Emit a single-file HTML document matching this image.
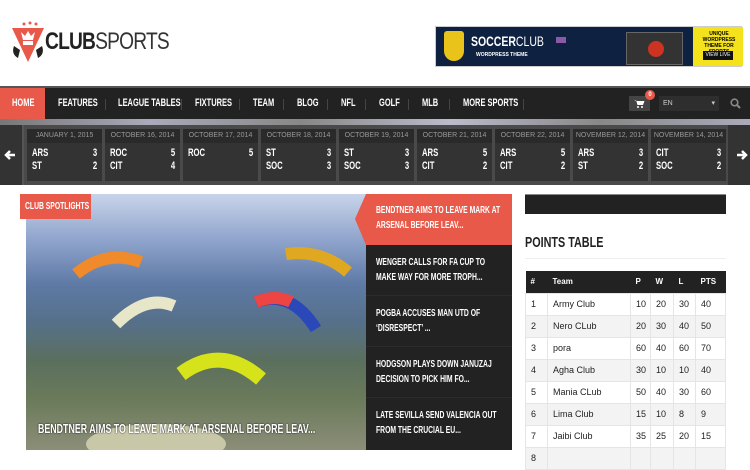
<!DOCTYPE html>
<html><head><meta charset="utf-8"><style>
*{margin:0;padding:0;box-sizing:border-box}
body{width:750px;height:450px;overflow:hidden;background:#fff;font-family:"Liberation Sans",sans-serif;position:relative}
.c{font-family:"Liberation Sans",sans-serif;font-weight:bold;text-transform:uppercase}
.s{display:inline-block;transform:scaleX(.68);transform-origin:0 0;white-space:nowrap}
.abs{position:absolute}
.nav{top:86px;left:0;width:750px;height:33px;background:#222;border-top:2px solid #555}
.nav a{position:absolute;top:0;height:31px;line-height:31px;color:#fff;font-size:11px;text-decoration:none;transform:scaleX(.68);transform-origin:0 0;white-space:nowrap}
.sep{position:absolute;top:11px;width:1px;height:11px;background:#444}
.tick{top:119px;left:0;width:750px;height:66px;background:#4a4a4a}
.cell{position:absolute;top:10px;width:75px;height:52px;background:#333}
.cell .d{height:14px;background:#2a2a2a;color:#999;font-size:7px;text-align:center;line-height:14px;font-weight:normal}
.cell .r{font-size:11px;color:#fff;height:13px;line-height:13px;padding:0 5px;position:relative}
.cell .r span:first-child{display:inline-block;transform:scaleX(.7);transform-origin:0 0}
.cell .r span:last-child{position:absolute;right:5px;transform:scaleX(.7);transform-origin:100% 0}
.nw{position:absolute;left:366px;width:146px;color:#fff;font-size:10px;line-height:15px;padding:10px 10px;border-bottom:1px solid #2c2c2c}
.nw div{width:186px;transform:scaleX(.68);transform-origin:0 0;white-space:normal}
table{border-collapse:collapse;font-size:9px;color:#222}
td{border:1px solid #e5e5e5;height:22px;padding-left:5px}
</style></head><body>
<!-- logo -->
<svg class="abs" style="left:10px;top:20px" width="36" height="44" viewBox="0 0 36 44">
<path d="M2 8 L34 8 L18 42 Z" fill="#e8594a"/>
<path d="M4 26 Q1 34 8 38 L10 30 Z M32 26 Q35 34 28 38 L26 30Z" fill="#222"/>
<path d="M11 12 L13 20 L23 20 L25 12 L21 16 L18 11 L15 16 Z" fill="#fff"/>
<rect x="13" y="21" width="10" height="4" fill="#fff"/>
<circle cx="14" cy="4" r="1.5" fill="#e8594a"/><circle cx="20" cy="3" r="1.5" fill="#e8594a"/><circle cx="26" cy="4" r="1.5" fill="#e8594a"/>
</svg>
<div class="abs" style="left:45px;top:28px;font-size:24px;letter-spacing:-1px;color:#222;transform:scaleX(.8);transform-origin:0 0;white-space:nowrap"><b>CLUB</b><span style="color:#333">SPORTS</span></div>
<!-- banner -->
<div class="abs" style="left:435px;top:26px;width:307px;height:41px;background:#0f2140;border:1px solid #ccc">
<div class="abs" style="left:8px;top:4px;width:20px;height:30px;background:#e9c21a;border-radius:3px 3px 10px 10px"></div>
<div class="abs" style="left:35px;top:6px;color:#fff;font-size:14px;font-weight:bold;transform:scaleX(.75);transform-origin:0 0">SOCCER<span style="font-weight:normal">CLUB</span></div>
<div class="abs" style="left:40px;top:25px;color:#fff;font-size:5px;font-weight:bold">WORDPRESS THEME</div>
<div class="abs" style="left:120px;top:10px;width:10px;height:6px;background:#8b5aa6"></div>
<div class="abs" style="left:190px;top:5px;width:57px;height:33px;background:#333;border:1px solid #666"></div>
<div class="abs" style="left:212px;top:14px;width:16px;height:16px;border-radius:50%;background:#c32;"></div>
<div class="abs" style="left:257px;top:0;width:50px;height:39px;background:#f4e21d"></div>
<div class="abs" style="left:259px;top:4px;width:48px;font-size:5px;font-weight:bold;text-align:center">UNIQUE WORDPRESS THEME FOR SPORTS</div>
<div class="abs" style="left:267px;top:24px;width:30px;height:9px;background:#111;color:#fff;font-size:5px;text-align:center;line-height:9px">VIEW LIVE</div>
</div>
<!-- nav -->
<div class="abs nav c">
<div class="abs" style="left:0;top:0;width:45px;height:31px;background:#e8594a"></div>
<a style="left:12px">Home</a><a style="left:58px">Features</a><a style="left:118px">League Tables</a><a style="left:195px">Fixtures</a><a style="left:253px">Team</a><a style="left:297px">Blog</a><a style="left:341px">NFL</a><a style="left:379px">Golf</a><a style="left:422px">MLB</a><a style="left:463px">More Sports</a>
<div class="sep" style="left:105px"></div><div class="sep" style="left:181px"></div><div class="sep" style="left:239px"></div><div class="sep" style="left:283px"></div><div class="sep" style="left:327px"></div><div class="sep" style="left:365px"></div><div class="sep" style="left:408px"></div><div class="sep" style="left:449px"></div><div class="sep" style="left:523px"></div>
<div class="abs" style="left:629px;top:8px;width:21px;height:15px;background:#444"></div>
<svg class="abs" style="left:634px;top:11px" width="11" height="9"><path d="M0 1h2l1.5 5h5.5l1.5-4H3" fill="#fff"/><circle cx="4" cy="8" r="1" fill="#fff"/><circle cx="8" cy="8" r="1" fill="#fff"/></svg>
<div class="abs" style="left:645px;top:2px;width:10px;height:10px;border-radius:50%;background:#e8594a;color:#fff;font-size:6px;text-align:center;line-height:10px">0</div>
<div class="abs" style="left:659px;top:8px;width:60px;height:15px;background:#2e2e2e;color:#ccc;font-size:7px;line-height:15px;padding-left:4px;font-weight:normal">EN<span style="position:absolute;right:4px">▾</span></div>
<svg class="abs" style="left:730px;top:10px" width="11" height="11"><circle cx="4.5" cy="4.5" r="3.3" stroke="#888" stroke-width="1.6" fill="none"/><line x1="7" y1="7" x2="10" y2="10" stroke="#888" stroke-width="2"/></svg>
</div>
<!-- ticker -->
<div class="abs tick">
<div class="abs" style="left:0;top:0;width:750px;height:6px;background:linear-gradient(90deg,#777,#aab 20%,#888 40%,#bbc 60%,#888 80%,#aab)"></div>
<div class="abs" style="left:0;top:6px;width:22px;height:60px;background:#333"></div>
<svg class="abs" style="left:4px;top:30px" width="12" height="12"><path d="M11 6H3M6 2L2 6l4 4" stroke="#fff" stroke-width="2.5" fill="none"/></svg>
<div class="abs" style="left:22px;top:6px;width:2px;height:60px;background:#555"></div>
<div class="abs" style="left:728px;top:6px;width:22px;height:60px;background:#333"></div>
<svg class="abs" style="left:736px;top:30px" width="12" height="12"><path d="M1 6h8M6 2l4 4-4 4" stroke="#fff" stroke-width="2.5" fill="none"/></svg>
<div class="c">
<div class="cell" style="left:27px"><div class="d">JANUARY 1, 2015</div><div class="r" style="margin-top:4px"><span>ARS</span><span>3</span></div><div class="r"><span>ST</span><span>2</span></div></div>
<div class="cell" style="left:105px"><div class="d">OCTOBER 16, 2014</div><div class="r" style="margin-top:4px"><span>ROC</span><span>5</span></div><div class="r"><span>CIT</span><span>4</span></div></div>
<div class="cell" style="left:183px"><div class="d">OCTOBER 17, 2014</div><div class="r" style="margin-top:4px"><span>ROC</span><span>5</span></div></div>
<div class="cell" style="left:261px"><div class="d">OCTOBER 18, 2014</div><div class="r" style="margin-top:4px"><span>ST</span><span>3</span></div><div class="r"><span>SOC</span><span>3</span></div></div>
<div class="cell" style="left:339px"><div class="d">OCTOBER 19, 2014</div><div class="r" style="margin-top:4px"><span>ST</span><span>3</span></div><div class="r"><span>SOC</span><span>3</span></div></div>
<div class="cell" style="left:417px"><div class="d">OCTOBER 21, 2014</div><div class="r" style="margin-top:4px"><span>ARS</span><span>5</span></div><div class="r"><span>CIT</span><span>2</span></div></div>
<div class="cell" style="left:495px"><div class="d">OCTOBER 22, 2014</div><div class="r" style="margin-top:4px"><span>ARS</span><span>5</span></div><div class="r"><span>CIT</span><span>2</span></div></div>
<div class="cell" style="left:573px"><div class="d">NOVEMBER 12, 2014</div><div class="r" style="margin-top:4px"><span>ARS</span><span>3</span></div><div class="r"><span>ST</span><span>2</span></div></div>
<div class="cell" style="left:651px"><div class="d">NOVEMBER 14, 2014</div><div class="r" style="margin-top:4px"><span>CIT</span><span>3</span></div><div class="r"><span>SOC</span><span>2</span></div></div>
</div>
</div>
<!-- image -->
<div class="abs" style="left:26px;top:194px;width:340px;height:256px;overflow:hidden;background:linear-gradient(180deg,#c8d4ea 0%,#8fa4cc 18%,#5e7aa6 35%,#56708a 50%,#5b6f5e 65%,#6a7a5a 80%,#8c8e78 100%)">
<svg width="340" height="256" style="position:absolute;left:0;top:0">
<path d="M50 80 Q80 55 115 68" stroke="#f08a2a" stroke-width="12" fill="none"/>
<path d="M260 60 Q295 55 322 78" stroke="#e0a820" stroke-width="12" fill="none"/>
<path d="M90 130 Q120 100 148 112" stroke="#e8e6c8" stroke-width="12" fill="none"/>
<path d="M230 108 Q265 95 290 135" stroke="#2a48b8" stroke-width="12" fill="none"/>
<path d="M230 108 Q250 100 265 108" stroke="#e44" stroke-width="12" fill="none"/>
<path d="M155 180 Q195 150 235 185" stroke="#d6e31a" stroke-width="15" fill="none"/>
<ellipse cx="130" cy="250" rx="70" ry="20" fill="#c8c8a8"/>
</svg>
</div>
<div class="abs c" style="left:20px;top:194px;width:71px;height:25px;background:#e8594a;color:#fff;font-size:10px;line-height:25px;padding-left:5px"><span class="s">Club Spotlights</span></div>
<div class="abs c" style="left:38px;top:421px;color:#fff;font-size:13px;text-shadow:0 0 2px #000"><span class="s">Bendtner aims to leave mark at Arsenal before leav...</span></div>
<!-- news -->
<div class="abs" style="left:366px;top:194px;width:146px;height:256px;background:#222"></div>
<div class="nw c" style="top:194px;height:51px;background:#e8594a;border:0;padding-top:9px"><div>Bendtner aims to leave mark at Arsenal before leav...</div></div>
<div class="abs" style="left:355px;top:194px;width:0;height:0;border-top:25px solid transparent;border-bottom:26px solid transparent;border-right:11px solid #e8594a"></div>
<div class="nw c" style="top:245px;height:51px"><div>Wenger calls for FA Cup to make way for more troph...</div></div>
<div class="nw c" style="top:296px;height:51px"><div>Pogba accuses Man Utd of ‘disrespect’ ...</div></div>
<div class="nw c" style="top:347px;height:51px"><div>Hodgson plays down Januzaj decision to pick him fo...</div></div>
<div class="nw c" style="top:398px;height:52px;border:0"><div>Late Sevilla send Valencia out from the crucial Eu...</div></div>
<!-- sidebar -->
<div class="abs" style="left:525px;top:194px;width:201px;height:20px;background:#222;border-top:1px solid #888"></div>
<div class="abs c" style="left:525px;top:234px;font-size:15px;color:#222"><span class="s" style="transform:scaleX(.72)">Points Table</span></div>
<div class="abs" style="left:525px;top:258px;width:201px;height:1px;background:#eee"></div>
<table class="abs" style="left:525px;top:271px;width:201px">
<tr style="background:#222;color:#fff;font-weight:bold;font-size:8px"><td style="border:0;width:22px">#</td><td style="border:0;width:83px">Team</td><td style="border:0;width:20px">P</td><td style="border:0;width:23px">W</td><td style="border:0;width:22px">L</td><td style="border:0">PTS</td></tr>
<tr><td>1</td><td>Army Club</td><td>10</td><td>20</td><td>30</td><td>40</td></tr>
<tr style="background:#f3f3f3"><td>2</td><td>Nero CLub</td><td>20</td><td>30</td><td>40</td><td>50</td></tr>
<tr><td>3</td><td>pora</td><td>60</td><td>40</td><td>60</td><td>70</td></tr>
<tr style="background:#f3f3f3"><td>4</td><td>Agha Club</td><td>30</td><td>10</td><td>10</td><td>40</td></tr>
<tr><td>5</td><td>Mania CLub</td><td>50</td><td>40</td><td>30</td><td>60</td></tr>
<tr style="background:#f3f3f3"><td>6</td><td>Lima Club</td><td>15</td><td>10</td><td>8</td><td>9</td></tr>
<tr><td>7</td><td>Jaibi Club</td><td>35</td><td>25</td><td>20</td><td>15</td></tr>
<tr style="background:#f3f3f3"><td>8</td><td></td><td></td><td></td><td></td><td></td></tr>
</table>
</body></html>
